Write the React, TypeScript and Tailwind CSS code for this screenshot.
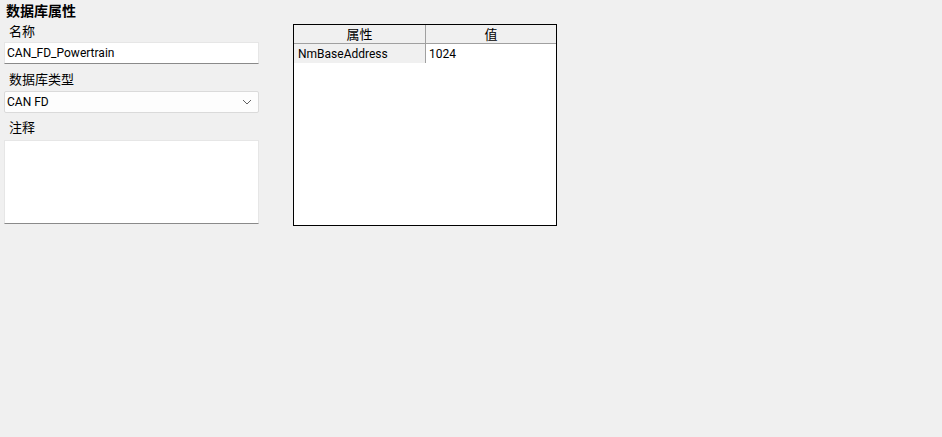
import React from "react";

const FONT = { fontFamily: 'Roboto, "Noto Sans CJK SC", sans-serif' };

export default function App() {
  return (
    <div
      className="w-[942px] h-[437px] bg-[#f0f0f0] flex items-start text-black"
      style={FONT}
    >
      <div className="ml-[4px] w-[255px] flex flex-col">
        <div className="h-[22px] leading-[22px] pl-[2px] text-[14px] font-bold">数据库属性</div>
        <div className="h-[20px] leading-[20px] pl-[5px] text-[13px]">名称</div>
        <div className="h-[22px] bg-white border border-[#e6e6e6] border-b-[#8a8a8a] flex items-center pl-[2px] text-[12px]">
          CAN_FD_Powertrain
        </div>
        <div className="mt-[6px] mb-[1px] h-[20px] leading-[20px] pl-[5px] text-[13px]">数据库类型</div>
        <div className="h-[22px] bg-[#fdfdfd] border border-[#dadada] rounded-[2px] flex items-center justify-between pl-[2px] pr-[6px] text-[12px]">
          <span>CAN FD</span>
          <svg width="10" height="6" viewBox="0 0 10 6" fill="none">
            <path d="M1 1 L5 5 L9 1" stroke="#606060" strokeWidth="1" />
          </svg>
        </div>
        <div className="mt-[5px] mb-[2px] h-[20px] leading-[20px] pl-[5px] text-[13px]">注释</div>
        <div className="h-[84px] bg-white border border-[#e6e6e6] border-b-[#8a8a8a]"></div>
      </div>

      <div className="ml-[34px] mt-[24px] w-[264px] h-[202px] border border-black bg-white flex flex-col">
        <div className="h-[19px] grid grid-cols-[132px_1fr] bg-[#f0f0f0] border-b border-[#a0a0a0] text-[13px]">
          <div className="border-r border-[#a0a0a0] flex items-center justify-center">属性</div>
          <div className="flex items-center justify-center">值</div>
        </div>
        <div className="h-[19px] grid grid-cols-[132px_1fr] text-[12px]">
          <div className="bg-[#f0f0f0] border-r border-[#a0a0a0] flex items-center pl-[4px]">NmBaseAddress</div>
          <div className="flex items-center pl-[3px]">1024</div>
        </div>
      </div>
    </div>
  );
}
